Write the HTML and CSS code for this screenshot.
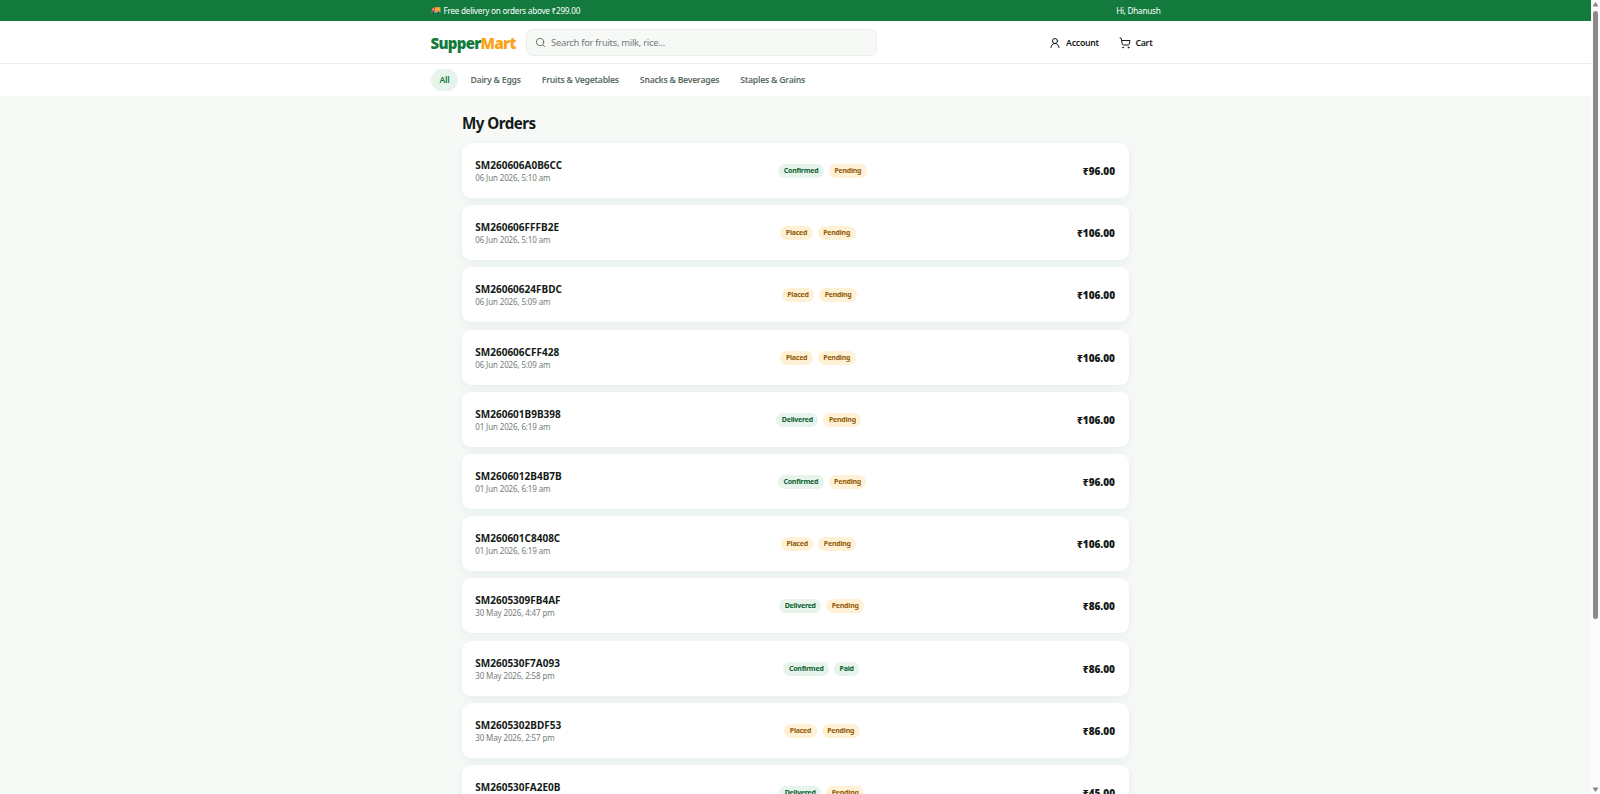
FILE: index.html
```html
<!DOCTYPE html>
<html lang="en">
<head>
  <meta charset="UTF-8" />
  <title>My Orders - SupperMart</title>
  <meta name="viewport" content="width=device-width, initial-scale=1" />
  <link rel="stylesheet" href="styles.css">
</head>
<body>

  <div class="page">
    <div class="topbar">
      <div class="container topbar-inner">
        <span class="delivery">
          <svg class="truck" viewBox="0 0 18 12">
            <path d="M7 0h10v8H7z" fill="#f7a634"/>
            <path d="M1 5l2-4h4v7H1z" fill="#e8443a"/>
            <path d="M2.300 4.500l1.200-2H5.500v2z" fill="#bfe4f5"/>
            <path d="M1 8h16v1.500H1z" fill="#c8cdd0"/>
            <circle cx="4" cy="9.500" r="1.700" fill="#34383d"/>
            <circle cx="13.500" cy="9.500" r="1.700" fill="#34383d"/>
          </svg>
          <span class="delivery-text">Free delivery on orders above ₹299.00</span>
        </span>
        <span class="greeting">Hi, Dhanush</span>
      </div>
    </div>

    <header class="header">
      <div class="container header-inner">
        <a class="logo">Supper<span>Mart</span></a>
        <div class="search">
          <svg class="icon" viewBox="0 0 24 24"><circle cx="11" cy="11" r="8"/><path d="M21 21l-4.350-4.350"/></svg>
          <span>Search for fruits, milk, rice...</span>
        </div>
        <div class="actions">
          <a class="action">
            <svg class="icon" viewBox="0 0 24 24"><circle cx="12" cy="8" r="5"/><path d="M20 21a8 8 0 0 0-16 0"/></svg>
            <span>Account</span>
          </a>
          <a class="action cart">
            <svg class="icon" viewBox="0 0 24 24"><circle cx="8" cy="21" r="1"/><circle cx="19" cy="21" r="1"/><path d="M2.050 2.050h2l2.660 12.420a2 2 0 0 0 2 1.580h9.780a2 2 0 0 0 1.950-1.570l1.650-7.430H5.120"/></svg>
            <span>Cart</span>
          </a>
        </div>
      </div>
    </header>

    <nav class="categories">
      <div class="container categories-inner">
        <a class="active">All</a>
        <a>Dairy &amp; Eggs</a>
        <a>Fruits &amp; Vegetables</a>
        <a>Snacks &amp; Beverages</a>
        <a>Staples &amp; Grains</a>
      </div>
    </nav>

    <main class="orders">
      <h1>My Orders</h1>

      <a class="order">
        <div class="info"><strong>SM260606A0B6CC</strong><span>06 Jun 2026, 5:10 am</span></div>
        <div class="badges"><span class="badge green">Confirmed</span><span class="badge amber">Pending</span></div>
        <b class="total">₹96.00</b>
      </a>
      <a class="order">
        <div class="info"><strong>SM260606FFFB2E</strong><span>06 Jun 2026, 5:10 am</span></div>
        <div class="badges"><span class="badge amber">Placed</span><span class="badge amber">Pending</span></div>
        <b class="total">₹106.00</b>
      </a>
      <a class="order">
        <div class="info"><strong>SM26060624FBDC</strong><span>06 Jun 2026, 5:09 am</span></div>
        <div class="badges"><span class="badge amber">Placed</span><span class="badge amber">Pending</span></div>
        <b class="total">₹106.00</b>
      </a>
      <a class="order">
        <div class="info"><strong>SM260606CFF428</strong><span>06 Jun 2026, 5:09 am</span></div>
        <div class="badges"><span class="badge amber">Placed</span><span class="badge amber">Pending</span></div>
        <b class="total">₹106.00</b>
      </a>
      <a class="order">
        <div class="info"><strong>SM260601B9B398</strong><span>01 Jun 2026, 6:19 am</span></div>
        <div class="badges"><span class="badge green">Delivered</span><span class="badge amber">Pending</span></div>
        <b class="total">₹106.00</b>
      </a>
      <a class="order">
        <div class="info"><strong>SM2606012B4B7B</strong><span>01 Jun 2026, 6:19 am</span></div>
        <div class="badges"><span class="badge green">Confirmed</span><span class="badge amber">Pending</span></div>
        <b class="total">₹96.00</b>
      </a>
      <a class="order">
        <div class="info"><strong>SM260601C8408C</strong><span>01 Jun 2026, 6:19 am</span></div>
        <div class="badges"><span class="badge amber">Placed</span><span class="badge amber">Pending</span></div>
        <b class="total">₹106.00</b>
      </a>
      <a class="order">
        <div class="info"><strong>SM2605309FB4AF</strong><span>30 May 2026, 4:47 pm</span></div>
        <div class="badges"><span class="badge green">Delivered</span><span class="badge amber">Pending</span></div>
        <b class="total">₹86.00</b>
      </a>
      <a class="order">
        <div class="info"><strong>SM260530F7A093</strong><span>30 May 2026, 2:58 pm</span></div>
        <div class="badges"><span class="badge green">Confirmed</span><span class="badge green">Paid</span></div>
        <b class="total">₹86.00</b>
      </a>
      <a class="order">
        <div class="info"><strong>SM2605302BDF53</strong><span>30 May 2026, 2:57 pm</span></div>
        <div class="badges"><span class="badge amber">Placed</span><span class="badge amber">Pending</span></div>
        <b class="total">₹86.00</b>
      </a>
      <a class="order">
        <div class="info"><strong>SM260530FA2E0B</strong><span>30 May 2026, 2:57 pm</span></div>
        <div class="badges"><span class="badge green">Delivered</span><span class="badge amber">Pending</span></div>
        <b class="total">₹45.00</b>
      </a>
    </main>
  </div>

  <div class="scrollbar">
    <svg viewBox="0 0 7 5"><path d="M3.500 0L6.500 4.500H.5z"/></svg>
    <div class="track"><div class="thumb"></div></div>
    <svg viewBox="0 0 7 5"><path d="M3.500 5L6.500 .5H.5z"/></svg>
  </div>

</body>
</html>
```

FILE: styles.css
```css
* {
  box-sizing: border-box;
}

body {
  margin: 0;
  height: 794px;
  display: flex;
  overflow: hidden;
  background: #f7f9f7;
  color: #141a17;
  font-family: "Noto Sans", "Open Sans", sans-serif;
  font-size: 10px;
}

.page {
  flex: 1;
  min-width: 0;
  height: 794px;
  overflow: hidden;
}

.container {
  width: 730px;
  margin: 0 auto;
  display: flex;
  align-items: center;
}

.topbar {
  height: 21px;
  background: #137a3e;
  color: #fff;
  font-size: 8.2px;
  letter-spacing: -0.26px;
}

.topbar-inner {
  height: 21px;
  justify-content: space-between;
}

.delivery {
  display: flex;
  align-items: center;
  gap: 3px;
}

.truck {
  width: 10px;
  height: 7px;
}

.header {
  height: 43px;
  background: #fff;
  border-bottom: 1px solid #eceeed;
}

.header-inner {
  height: 42px;
}

.logo {
  width: 95.5px;
  padding-top: 2px;
  color: #137a3e;
  font-size: 15px;
  font-weight: 900;
  letter-spacing: -0.7px;
}

.logo span {
  color: #f9a31b;
}

.search {
  width: 350.5px;
  height: 27px;
  display: flex;
  align-items: center;
  gap: 5px;
  padding: 1px 9px 0 8px;
  background: #f7f9f7;
  border: 1px solid #eaeeeb;
  border-radius: 7px;
  color: #747977;
  font-size: 9.4px;
  letter-spacing: -0.27px;
}

.icon {
  width: 11px;
  height: 11px;
  fill: none;
  stroke: currentColor;
  stroke-width: 2;
  stroke-linecap: round;
  stroke-linejoin: round;
}

.search .icon {
  color: #5c6f65;
}

.actions {
  margin-left: auto;
  padding-right: 8px;
  display: flex;
  gap: 20.5px;
}

.action {
  display: flex;
  align-items: center;
  gap: 5px;
  padding-top: 1px;
  font-size: 8.7px;
  font-weight: 600;
  letter-spacing: -0.25px;
}

.action .icon {
  width: 12px;
  height: 12px;
}

.cart {
  gap: 4px;
  letter-spacing: -0.2px;
}

.categories {
  height: 32px;
  background: #fff;
}

.categories-inner {
  height: 32px;
  gap: 3px;
}

.categories a {
  padding: 0.5px 9px 0;
  line-height: 22px;
  border-radius: 11px;
  color: #5c6b63;
  font-size: 8.7px;
  font-weight: 600;
  letter-spacing: -0.26px;
  white-space: nowrap;
}

.categories .active {
  background: #e6f4ec;
  color: #137a3e;
}

.orders {
  width: 667px;
  margin: 0 auto;
  padding-top: 17px;
}

h1 {
  margin: 0 0 9px;
  font-size: 15.2px;
  line-height: 21px;
  font-weight: 700;
  letter-spacing: -0.55px;
}

.order {
  display: flex;
  align-items: center;
  justify-content: space-between;
  height: 55px;
  margin-bottom: 7.2px;
  padding: 1px 14px 0 13.3px;
  background: #fff;
  border-radius: 9px;
  box-shadow: 0 2px 10px rgba(19, 122, 62, 0.08);
}

.info {
  display: flex;
  flex-direction: column;
}

.info strong {
  font-size: 10px;
  line-height: 14px;
}

.info span {
  color: #747d78;
  font-size: 8px;
  line-height: 12px;
  letter-spacing: -0.14px;
}

.badges {
  display: flex;
  gap: 5px;
}

.badge {
  padding: 0 5.5px;
  line-height: 14px;
  border-radius: 7px;
  font-size: 7px;
  font-weight: 700;
  letter-spacing: -0.24px;
}

.green {
  background: #e6f4ec;
  color: #0d6030;
}

.amber {
  background: #fff1d6;
  color: #925b08;
}

.total {
  font-size: 10px;
  font-weight: 900;
  letter-spacing: 0;
}

.scrollbar {
  width: 9px;
  height: 794px;
  padding: 2px 1px;
  display: flex;
  flex-direction: column;
  align-items: center;
  background: #fcfcfc;
}

.scrollbar svg {
  width: 7px;
  height: 5px;
  fill: #858585;
}

.track {
  flex: 1;
  padding-top: 4px;
}

.thumb {
  width: 5px;
  height: 608px;
  border-radius: 3px;
  background: #8b8b8b;
}
```
